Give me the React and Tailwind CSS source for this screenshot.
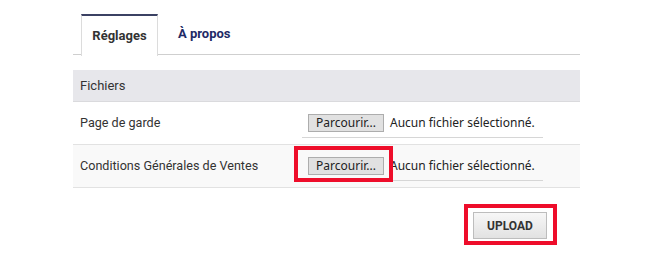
import React from "react";

const roboto = { fontFamily: "Roboto, 'Liberation Sans', sans-serif" };
const sys = { fontFamily: "'Noto Sans', 'Open Sans', sans-serif" };

function FileInput({ highlight }) {
  return (
    <div className="relative ml-[229px] w-[241px] h-[30px] border-b border-[#d6d6d6] flex items-center pl-[6px] gap-[6px]">
      <button
        className="h-[18px] w-[76px] bg-[#e1e1e1] border border-[#adadad] text-[12px] leading-none text-[#222] flex items-center justify-center"
        style={sys}
      >
        Parcourir...
      </button>
      <span className="text-[12px] text-[#222] whitespace-nowrap" style={sys}>
        Aucun fichier sélectionné.
      </span>
      {highlight && (
        <div className="absolute left-[-8px] top-[-5px] w-[99px] h-[36px] border-4 border-[#ee0d2a] pointer-events-none" />
      )}
    </div>
  );
}

function Row({ label, highlight, bg }) {
  return (
    <div className={`relative h-[43px] flex items-center border-b border-[#e2e2e2] ${bg}`}>
      <span className="absolute left-[7px] text-[12.6px] text-[#333]" style={roboto}>
        {label}
      </span>
      <FileInput highlight={highlight} />
    </div>
  );
}

export default function App() {
  return (
    <div className="w-[652px] h-[261px] bg-white" style={roboto}>
      <div className="ml-[73px] w-[507px] pt-[14px]">
        <div className="flex h-[41px] border-b border-[#cfcfcf]">
          <div className="ml-[8px] w-[77px] h-[42px] border-t-2 border-t-[#3b4163] border-x border-x-[#dcdcdc] bg-white flex items-center justify-center text-[13px] font-bold text-[#333]">
            Réglages
          </div>
          <div className="pl-[20px] flex items-center text-[13px] font-bold text-[#1e2a66]">
            À propos
          </div>
        </div>
        <div className="mt-[15px] h-[32px] bg-[#e7e7eb] border-b border-[#dadadd] flex items-center pl-[7px] text-[13px] text-[#333]">
          Fichiers
        </div>
        <Row label="Page de garde" bg="bg-white" />
        <Row label="Conditions Générales de Ventes" highlight bg="bg-[#f9f9f9]" />
        <div className="flex justify-end mt-[16px] pr-[23px]">
          <div className="border-4 border-[#ee0d2a] pt-[4px] pb-[2px] pl-[5px] pr-[6px]">
            <button className="w-[74px] h-[27px] border border-[#bdbdbd] bg-gradient-to-b from-[#f7f7f7] to-[#e2e2e2] text-[12px] font-bold text-[#333] flex items-center justify-center">
              UPLOAD
            </button>
          </div>
        </div>
      </div>
    </div>
  );
}
